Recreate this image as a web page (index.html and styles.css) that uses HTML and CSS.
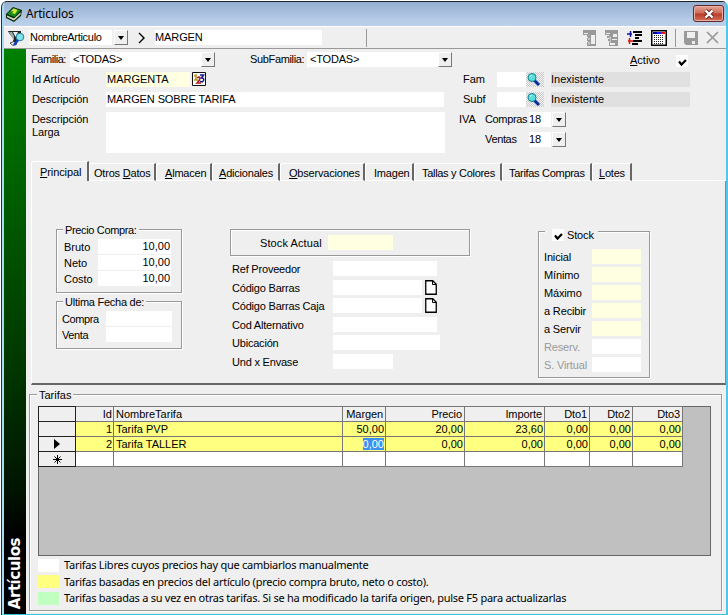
FILE: index.html
```html
<!DOCTYPE html>
<html lang="es">
<head>
<meta charset="utf-8">
<title>Articulos</title>
<link rel="stylesheet" href="styles.css">
</head>
<body>
<div class="window">
  <header class="titlebar">
    <svg class="book" width="16" height="16" viewBox="0 0 16 16"><path d="M0 8 7 1l9 3-1 6-7 6-8-4z" fill="#052b05"/><path d="M1 8 7.500 2l7 2.500L8.500 11z" fill="#198c19"/><path d="m1 9.500 7 3 6.500-6v2L8 14.500 1 11z" fill="#f4f5df"/><path d="m1.500 10.500 6.500 3 6-5.500" fill="none" stroke="#999" stroke-width=".6"/><path d="m4.500 5.500 3-3 4 1.500-2.500 4-3-1 2-2z" fill="#d8e83c"/></svg>
    <span class="caption">Articulos</span>
    <span class="close"><svg width="12" height="10" viewBox="0 0 12 10"><path d="m2.500 1.500 7 7m0-7-7 7" stroke="#5b2320" stroke-width="4"/><path d="m2.500 1.500 7 7m0-7-7 7" stroke="#fff" stroke-width="2.400"/></svg></span>
  </header>

  <div class="toolbar">
    <svg class="funnel" width="17" height="16" viewBox="0 0 17 16"><path d="M0 1h13v2L9 8v4H5V8L1 3z" fill="#222"/><path d="M5 2h5L7.500 7z" fill="#e8eeee"/><path d="M1 2h3l2 4v5z" fill="#9aa"/><path d="m2 13 4-1.500 3 2.500-4 1.500z" fill="#fff" stroke="#111" stroke-width=".7"/><circle cx="12" cy="7" r="3.800" fill="#7fe3ea" stroke="#27819a"/><path d="m10 10-4 5" stroke="#0b3fc0" stroke-width="2.500"/></svg>
    <div class="combo filter"><span class="value">NombreArticulo</span><span class="drop"></span></div>
    <svg class="next" width="8" height="12" viewBox="0 0 8 12"><path d="m1 1 5 5-5 5" fill="none" stroke="#000" stroke-width="1.400"/></svg>
    <span class="field search">MARGEN</span>
    <i class="divider"></i>
    <div class="tools">
      <svg width="14" height="16" viewBox="0 0 14 16"><path d="M0 0h13v16H0z" fill="#999"/><path d="M0 5h4v11H0zM8 5h4v9H8z" fill="#efefef"/><path d="M1 3.500h4m1 2v9M4 7.500h3m-3 4h3" stroke="#efefef"/><path d="M5 6h2v2H5zm0 4h2v2H5z" fill="#999"/></svg>
      <svg width="14" height="16" viewBox="0 0 14 16"><path d="M0 0h13v16H0z" fill="#999"/><path d="M0 5h4v11H0zM8 4h4v3H8zM5 13h5v2H5z" fill="#efefef"/><path d="M1 3.500h4m0 3v6m2-3h5" stroke="#efefef"/><path d="M2 6h2v2H2zm1 3h2v2H3z" fill="#999"/></svg>
      <svg width="16" height="16" viewBox="0 0 16 16"><path d="M6 2h9M8 5h7M8 8h4M6 11h9M5 14h6" stroke="#000" stroke-width="2"/><path d="M0 4h5M3.500 1v6" stroke="#11119e" stroke-width="1.500"/><path d="M1 11h5M2.500 8v6" stroke="#e01010" stroke-width="1.500"/></svg>
      <svg width="16" height="16" viewBox="0 0 16 16"><path d="M.75.750h14.500v14.500H.75z" fill="#fff" stroke="#000" stroke-width="1.500"/><path d="M2 3h4" stroke="#00a" stroke-width="2"/><path d="M6 3h4" stroke="#1020ff" stroke-width="2"/><path d="M10 3h4" stroke="#e01010" stroke-width="2"/><path d="M3 5.500h10M3 7.500h10M3 9.500h10M3 11.500h10M3 13.500h10" stroke="#222" stroke-dasharray="1 1"/></svg>
      <i class="divider short"></i>
      <svg width="14" height="14" viewBox="0 0 14 14"><path d="M0 0h14v14H2l-2-2z" fill="#999"/><path d="M3 1h8v6H3zM8 10h3v3H8z" fill="#efefef"/></svg>
      <svg width="14" height="14" viewBox="0 0 14 14"><path d="m1 1 11 11M12 1 1 12" stroke="#999" stroke-width="1.700"/></svg>
    </div>
  </div>

  <div class="body">
    <aside class="side"><span>Artículos</span></aside>
    <main>
      <div class="filters">
        <label class="fam">Familia:</label>
        <div class="combo wide"><span class="value">&lt;TODAS&gt;</span><span class="drop"></span></div>
        <label class="subfam">SubFamilia:</label>
        <div class="combo wide"><span class="value">&lt;TODAS&gt;</span><span class="drop"></span></div>
        <label class="activo"><u>A</u>ctivo</label>
        <span class="check"><svg width="9" height="8" viewBox="0 0 9 8"><path d="M1 2.500 3.500 5.500 8 1" fill="none" stroke="#000" stroke-width="2.200"/></svg></span>
      </div>

      <div class="ficha">
        <div class="datos">
          <label>Id Artículo</label>
          <div class="idline"><span class="field key">MARGENTA</span><svg width="14" height="14" viewBox="0 0 14 14"><path d="M.5.500h13v13H.5z" fill="#fff" stroke="#111"/><path d="M2 4l2-1v5M2 8h4" fill="none" stroke="#b89818" stroke-width="1.500"/><path d="M5 6q3-2 3 0t-3 5h4" fill="none" stroke="#b01818" stroke-width="1.500"/><path d="M8 3h3.500L9.500 6q3 0 2 2.500T8 9" fill="none" stroke="#102090" stroke-width="1.600"/></svg></div>
          <label>Descripción</label>
          <span class="field desc">MARGEN SOBRE TARIFA</span>
          <label>Descripción<br>Larga</label>
          <span class="field larga"></span>
        </div>
        <div class="lookups">
          <div class="lookup"><label>Fam</label><span class="field code"></span><span class="lens"><svg width="17" height="15" viewBox="0 0 17 15"><path d="m8 8 5 5" stroke="#062b9c" stroke-width="3"/><circle cx="6" cy="5.500" r="4" fill="#58e0de" stroke="#167f8c"/><path d="M4 4.500 6 3" stroke="#dff"/></svg></span><span class="readonly">Inexistente</span></div>
          <div class="lookup"><label>Subf</label><span class="field code"></span><span class="lens"><svg width="17" height="15" viewBox="0 0 17 15"><path d="m8 8 5 5" stroke="#062b9c" stroke-width="3"/><circle cx="6" cy="5.500" r="4" fill="#58e0de" stroke="#167f8c"/><path d="M4 4.500 6 3" stroke="#dff"/></svg></span><span class="readonly">Inexistente</span></div>
          <div class="iva"><label class="tax">IVA</label><label class="kind">Compras</label><div class="combo rate"><span class="value">18</span><span class="drop"></span></div></div>
          <div class="iva"><label class="tax"></label><label class="kind">Ventas</label><div class="combo rate"><span class="value">18</span><span class="drop"></span></div></div>
        </div>
      </div>

      <nav class="tabs">
        <span class="tab t1 active"><u>P</u>rincipal</span><span class="tab t2">Otros <u>D</u>atos</span><span class="tab t3"><u>A</u>lmacen</span><span class="tab t4"><u>A</u>dicionales</span><span class="tab t5"><u>O</u>bservaciones</span><span class="tab t6">Imagen</span><span class="tab t7">Tallas y Colores</span><span class="tab t8">Tarifas Compras</span><span class="tab t9"><u>L</u>otes</span><span class="rest"></span>
      </nav>

      <section class="panel">
        <div class="col-precios">
          <div class="group precios">
            <span class="legend">Precio Compra:</span>
            <label>Bruto</label><span class="field num">10,00</span>
            <label>Neto</label><span class="field num">10,00</span>
            <label>Costo</label><span class="field num">10,00</span>
          </div>
          <div class="group fechas">
            <span class="legend">Ultima Fecha de:</span>
            <label>Compra</label><span class="field"></span>
            <label>Venta</label><span class="field"></span>
          </div>
        </div>
        <div class="col-datos">
          <div class="group actual"><label>Stock Actual</label><span class="field key"></span></div>
          <div class="refs">
            <label>Ref Proveedor</label><span class="field w104"></span>
            <label>Código Barras</label><div class="docline"><span class="field"></span><svg width="12" height="15" viewBox="0 0 12 15"><path d="M.75.750h7l3.500 3.500v10H.75z" fill="#fff" stroke="#000" stroke-width="1.300"/><path d="M7.500 1v3.500H11" fill="none" stroke="#000"/></svg></div>
            <label>Código Barras Caja</label><div class="docline"><span class="field"></span><svg width="12" height="15" viewBox="0 0 12 15"><path d="M.75.750h7l3.500 3.500v10H.75z" fill="#fff" stroke="#000" stroke-width="1.300"/><path d="M7.500 1v3.500H11" fill="none" stroke="#000"/></svg></div>
            <label>Cod Alternativo</label><span class="field w104"></span>
            <label>Ubicación</label><span class="field w107"></span>
            <label>Und x Envase</label><span class="field w60"></span>
          </div>
        </div>
        <div class="group stock">
          <span class="legend"><span class="check"><svg width="9" height="8" viewBox="0 0 9 8"><path d="M1 2.500 3.500 5.500 8 1" fill="none" stroke="#000" stroke-width="2.200"/></svg></span>Stock</span>
          <label>Inicial</label><span class="field key"></span>
          <label>Mínimo</label><span class="field key"></span>
          <label>Máximo</label><span class="field key"></span>
          <label>a Recibir</label><span class="field key"></span>
          <label>a Servir</label><span class="field key"></span>
          <label class="off">Reserv.</label><span class="field"></span>
          <label class="off">S. Virtual</label><span class="field"></span>
        </div>
      </section>

      <section class="group tarifas">
        <span class="legend">Tarifas</span>
        <div class="gridbox">
          <table>
            <colgroup><col class="c0"><col class="c1"><col class="c2"><col class="c3"><col class="c4"><col class="c5"><col class="c6"><col class="c7"><col class="c8"></colgroup>
            <tr class="head"><th></th><td>Id</td><td class="name">NombreTarifa</td><td>Margen</td><td>Precio</td><td>Importe</td><td>Dto1</td><td>Dto2</td><td>Dto3</td></tr>
            <tr class="base"><th></th><td>1</td><td class="name">Tarifa PVP</td><td>50,00</td><td>20,00</td><td>23,60</td><td>0,00</td><td>0,00</td><td>0,00</td></tr>
            <tr class="base"><th><svg width="6" height="10" viewBox="0 0 6 10"><path d="M0 0l6 5-6 5z"/></svg></th><td>2</td><td class="name">Tarifa TALLER</td><td><span class="selected">0,00</span></td><td>0,00</td><td>0,00</td><td>0,00</td><td>0,00</td><td>0,00</td></tr>
            <tr class="new"><th><svg width="9" height="9" viewBox="0 0 9 9"><path d="M4.500 0v9M0 4.500h9M1.500 1.500l6 6m0-6-6 6" stroke="#000"/></svg></th><td></td><td></td><td></td><td></td><td></td><td></td><td></td><td></td></tr>
          </table>
        </div>
        <ul class="key-list">
          <li class="free"><i></i><span>Tarifas Libres cuyos precios hay que cambiarlos manualmente</span></li>
          <li class="cost"><i></i><span>Tarifas basadas en precios del artículo (precio compra bruto, neto o costo).</span></li>
          <li class="derived"><i></i><span>Tarifas basadas a su vez en otras tarifas. Si se ha modificado la tarifa origen, pulse F5 para actualizarlas</span></li>
        </ul>
      </section>
    </main>
  </div>
</div>
</body>
</html>
```
FILE: styles.css
```css
* { box-sizing: border-box; }
body { margin: 0; background: #fff; font: 11px/15px "Liberation Sans", Arial, sans-serif; color: #000; white-space: nowrap; }
svg { display: block; flex: none; }
u { text-underline-offset: 1px; }
label { display: block; }

.window { width: 726px; height: 614px; margin: 1px 0 0 2px; display: flex; flex-direction: column; background: #efefef; border: solid; border-width: 1px 2px 1px 2px; border-color: #222 #4cc8ea #35c2dc #a9dcf0; border-radius: 6px 6px 0 0; box-shadow: -1px 0 0 #24343c; }
.titlebar { height: 24px; flex: none; display: flex; align-items: center; padding: 0 0 0 2px; background: linear-gradient(#94afd0, #b5cbe6 75%, #bcd0e8); border-radius: 4px 4px 0 0; }
.caption { margin-left: 4px; flex: 1; font: 12px/16px "Noto Sans", sans-serif; letter-spacing: -.2px; }
.close { width: 31px; height: 17px; margin: 0 2px 1px 0; display: flex; align-items: center; justify-content: center; background: linear-gradient(#e3a597, #cf6a57 48%, #b93a25 52%, #d4705c); border: 1px solid #5d2a30; border-radius: 3px; box-shadow: inset 0 0 0 1px #e9b0a5; }

.toolbar { height: 23px; flex: none; display: flex; align-items: center; padding-left: 4px; border-bottom: 1px solid #999; border-top: 1px solid #fff; }
.toolbar .funnel { margin-right: 4px; }
.combo { display: flex; height: 15px; }
.combo .value { flex: 1; background: #fff; padding-left: 3px; line-height: 14px; }
.drop { width: 14px; height: 15px; background: #efefef; border: 1px solid; border-color: #fff #777 #777 #fff; display: flex; align-items: center; justify-content: center; }
.drop::before { content: ""; border: solid transparent; border-width: 4px 3.5px 0; border-top-color: #000; }
.filter { width: 99px; }
.filter .value { padding-left: 1px; margin-right: 2px; letter-spacing: -.3px; }
.filter { letter-spacing: -.3px; }
.next { margin: 0 9px 0 10px; }
.field { display: block; height: 15px; background: #fff; padding-left: 1px; line-height: 14px; }
.field.key { background: #ffffe1; }
.search { width: 167px; padding-left: 0; letter-spacing: -.1px; }
.divider { width: 1px; height: 18px; background: #999; margin-left: 44px; }
.divider.short { margin: 0; }
.tools { margin-left: auto; padding-right: 6px; display: flex; align-items: center; gap: 8px; }

.body { flex: 1; display: flex; min-height: 0; }
.side { width: 22px; flex: none; display: flex; align-items: flex-end; justify-content: center; padding-bottom: 5px; background: linear-gradient(#008000, #003600 57%, #001400 78%, #000 86%); }
.side span { writing-mode: vertical-rl; transform: rotate(180deg); color: #fff; font: bold 15px/18px "DejaVu Sans", sans-serif; letter-spacing: -.45px; }
main { flex: 1; min-width: 0; padding-left: 3px; }

.filters { display: flex; height: 17px; margin-top: 3px; padding-left: 2px; }
.fam { width: 39px; letter-spacing: -.45px; }
.combo.wide { width: 145px; letter-spacing: -.2px; }
.subfam { width: 57px; margin-left: 35px; letter-spacing: -.35px; }
.activo { margin-left: 178px; width: 46px; padding-top: 1px; }
.check { width: 12px; height: 12px; background: #fff; display: flex; align-items: flex-end; justify-content: center; }
.filters .check { margin-top: 3px; }

.ficha { display: flex; height: 89px; padding: 3px 0 0 3px; }
.datos { display: grid; grid-template-columns: 74px 339px; grid-template-rows: 15px 15px 41px; row-gap: 5px; }
.datos label { line-height: 13px; padding-top: 1px; letter-spacing: -.1px; }
.idline { display: flex; gap: 2px; }
.idline .field { width: 84px; }
.desc { width: 338px; letter-spacing: -.1px; }
.larga { height: 41px; }
.lookups { display: grid; grid-auto-rows: 15px; row-gap: 5px; margin-left: 14px; align-content: start; }
.lookup, .iva { display: flex; }
.iva label { line-height: 14px; }
.lookup label { width: 38px; padding-left: 4px; }
.code { width: 29px; }
.lens { width: 18px; background: repeating-conic-gradient(#c9c9c9 0 25%, #f4f4f4 0 50%) 0 0/2px 2px; }
.readonly { width: 139px; margin-left: 7px; background: #e0e0e0; line-height: 14px; }
.tax { width: 26px; }
.kind { width: 44px; letter-spacing: -.35px; }
.rate { width: 37px; }
.rate .value { padding-left: 0; margin-right: 1px; }

.tabs { display: flex; align-items: flex-end; height: 22px; margin: 1px 0 0 2px; }
.tab { height: 18px; border-top: 1px solid #fff; border-right: 2px solid #666; border-bottom: 1px solid #fff; border-left: 1px solid #fff; border-radius: 3px 0 0 0; line-height: 18px; letter-spacing: -.2px; }
.tab.active { height: 20px; border-bottom: 0; line-height: 20px; letter-spacing: -.1px; }
.t1 { width: 58px; padding-left: 8px; }
.t2 { width: 67px; padding-left: 4px; }
.t3 { width: 56px; padding-left: 8px; }
.t4 { width: 68px; padding-left: 6px; }
.t5 { width: 85px; padding-left: 8px; }
.t6 { width: 49px; padding-left: 8px; }
.t7 { width: 88px; padding-left: 7px; }
.t8 { width: 90px; padding-left: 6px; }
.t7, .t8 { letter-spacing: -.3px; }
.t9 { width: 40px; padding-left: 6px; }
.rest { flex: 1; border-bottom: 1px solid #fff; }

.panel { height: 204px; margin-left: 2px; padding: 48px 0 0 24px; display: flex; align-items: flex-start; border: solid; border-width: 0 1px 2px; border-color: #fff #888 #666 #fff; }
.panel label { line-height: 17px; }
.group { position: relative; border: 1px solid #999; box-shadow: 1px 1px 0 #fff, inset 1px 1px 0 #fff; }
.legend { position: absolute; top: -7px; left: 6px; padding: 0 2px; background: #efefef; display: flex; }
.precios .legend { letter-spacing: -.35px; }
.fechas .legend { letter-spacing: -.25px; }
.precios { width: 126px; height: 64px; display: grid; grid-template-columns: 34px 73px; grid-auto-rows: 15px; row-gap: 1px; padding: 9px 0 0 7px; align-content: start; }
.num { text-align: right; padding-right: 1px; }
.fechas { width: 126px; height: 48px; margin-top: 8px; display: grid; grid-template-columns: 44px 66px; grid-auto-rows: 15px; row-gap: 1px; padding: 9px 0 0 5px; align-content: start; }
.fechas label { letter-spacing: -.4px; }
.col-datos { margin-left: 48px; }
.actual { width: 240px; height: 27px; display: flex; padding: 5px 0 0 29px; }
.actual label { width: 68px; letter-spacing: .1px; }
.actual .field { width: 65px; }
.refs { display: grid; grid-template-columns: 101px auto; grid-template-rows: 19px 18px 19px 18px 19px 18px; padding: 5px 0 0 2px; letter-spacing: -.2px; }
.w104 { width: 104px; }
.w107 { width: 107px; }
.w60 { width: 60px; }
.docline { display: flex; gap: 3px; }
.docline .field { width: 89px; }
.stock { width: 112px; height: 147px; margin: 2px 0 0 68px; display: grid; grid-template-columns: 48px 49px; grid-auto-rows: 15px; row-gap: 3px; padding: 17px 0 0 5px; align-content: start; letter-spacing: -.15px; }
.stock .legend { gap: 3px; top: -3px; left: 6px; padding: 0 4px 0 7px; line-height: 12px; }
.off { color: #999; }

.tarifas { width: 693px; height: 217px; margin-top: 9px; padding: 11px 0 0 8px; }
.tarifas .legend { left: 7px; }
.gridbox { width: 673px; height: 150px; background: #c0c0c0; border: 1px solid #666; }
table { border-collapse: collapse; table-layout: fixed; width: 644px; margin: -1px 0 0 -1px; }
.c0 { width: 37px; } .c1 { width: 38px; } .c2 { width: 229px; } .c3 { width: 43px; } .c4 { width: 79px; } .c5 { width: 80px; } .c6 { width: 45px; } .c7 { width: 43px; } .c8 { width: 50px; }
td, th { height: 15px; padding: 0 1px 0 0; border: 1px solid #777; text-align: right; line-height: 13px; background: #fff; }
td.name { text-align: left; padding-left: 2px; }
th { background: #efefef; border-color: #222; padding: 0; }
th svg { margin: auto; }
.head td { background: #efefef; }
.head td:nth-child(n+4) { padding-right: 2px; letter-spacing: -.1px; }
.base td { background: #ffff80; }
.selected { background: #3a91ee; color: #fff; }
.key-list { list-style: none; margin: 1px 0 0; padding: 0; font: 11px/16.500px "Noto Sans", sans-serif; letter-spacing: -.26px; }
.key-list li { display: flex; align-items: center; height: 16.500px; gap: 5px; }
.key-list i { width: 21px; height: 13px; background: #fff; }
.key-list .cost i { background: #ffff80; }
.key-list .derived i { background: #c0ffc0; }
```
